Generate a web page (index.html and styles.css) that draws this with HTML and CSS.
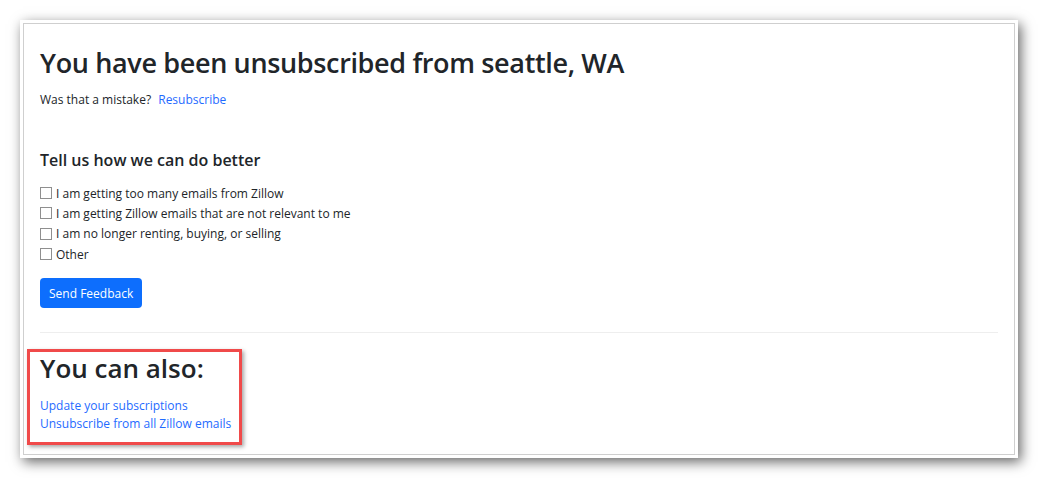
FILE: index.html
```html
<!DOCTYPE html>
<html lang="en">
<head>
    <meta charset="UTF-8">
    <title>Unsubscribed</title>
    <link rel="stylesheet" href="styles.css">
</head>
<body>
    <div class="frame">
        <div class="page">
            <h1 class="title">You have been unsubscribed from seattle, WA</h1>
            <p class="mistake">Was that a mistake? <a href="#">Resubscribe</a></p>

            <!-- Feedback form -->
            <form class="feedback">
                <h2>Tell us how we can do better</h2>
                <label class="option"><input type="checkbox"> I am getting too many emails from Zillow</label>
                <label class="option"><input type="checkbox"> I am getting Zillow emails that are not relevant to me</label>
                <label class="option"><input type="checkbox"> I am no longer renting, buying, or selling</label>
                <label class="option"><input type="checkbox"> Other</label>
                <button type="button" class="send-btn">Send Feedback</button>
            </form>

            <hr class="divider">

            <div class="also">
                <h2>You can also:</h2>
                <a href="#">Update your subscriptions</a>
                <a href="#">Unsubscribe from all Zillow emails</a>
            </div>
        </div>
    </div>
</body>
</html>
```

FILE: styles.css
```css
body {
    margin: 0;
    padding-bottom: 20px;
    font-family: "Open Sans", "Noto Sans", sans-serif;
    color: #212529;
    background-color: #fff;
}

a {
    color: #1f6bff;
    text-decoration: none;
}

.frame {
    margin: 20px 20px 0 20px;
    width: 992px;
    height: 432px;
    padding: 3px;
    background-color: #fff;
    box-shadow: 3px 4px 12px rgba(0, 0, 0, 0.6);
}

.page {
    height: 100%;
    box-sizing: border-box;
    border: 1px solid #cfcfcf;
    padding: 25px 16px 0 16px;
}

.title {
    margin: 0;
    font-size: 27px;
    font-weight: 600;
    line-height: 1;
    letter-spacing: -0.35px;
}

.mistake {
    margin: 15px 0 0 0;
    font-size: 12px;
    line-height: 18px;
}

.mistake a {
    margin-left: 4px;
}

.feedback {
    margin-top: 42px;
}

.feedback h2 {
    margin: 0 0 13px 0;
    font-size: 16px;
    font-weight: 600;
    line-height: 19px;
}

.option {
    display: flex;
    align-items: center;
    gap: 4px;
    font-size: 12px;
    height: 20.3px;
}

.option input {
    appearance: none;
    margin: 0;
    width: 12px;
    height: 12px;
    border: 1px solid #8f8f8f;
    background-color: #fff;
}

.send-btn {
    margin-top: 14px;
    padding: 0 9px;
    height: 30px;
    background-color: #0d6efd;
    color: white;
    border: none;
    border-radius: 4px;
    font-family: inherit;
    font-size: 12px;
    cursor: pointer;
}

.divider {
    margin: 24px 0 0 0;
    border: none;
    border-top: 1px solid #eee;
}

.also {
    margin-top: 16px;
    margin-left: -13px;
    width: 199px;
    padding: 3px 0 9px 10px;
    border: 3px solid #f04a4a;
    box-shadow: 2px 2px 4px rgba(0, 0, 0, 0.35);
}

.also h2 {
    margin: 0 0 16px 0;
    font-size: 26px;
    font-weight: 600;
    line-height: 1;
}

.also a {
    display: block;
    font-size: 12px;
    line-height: 18px;
}
```
